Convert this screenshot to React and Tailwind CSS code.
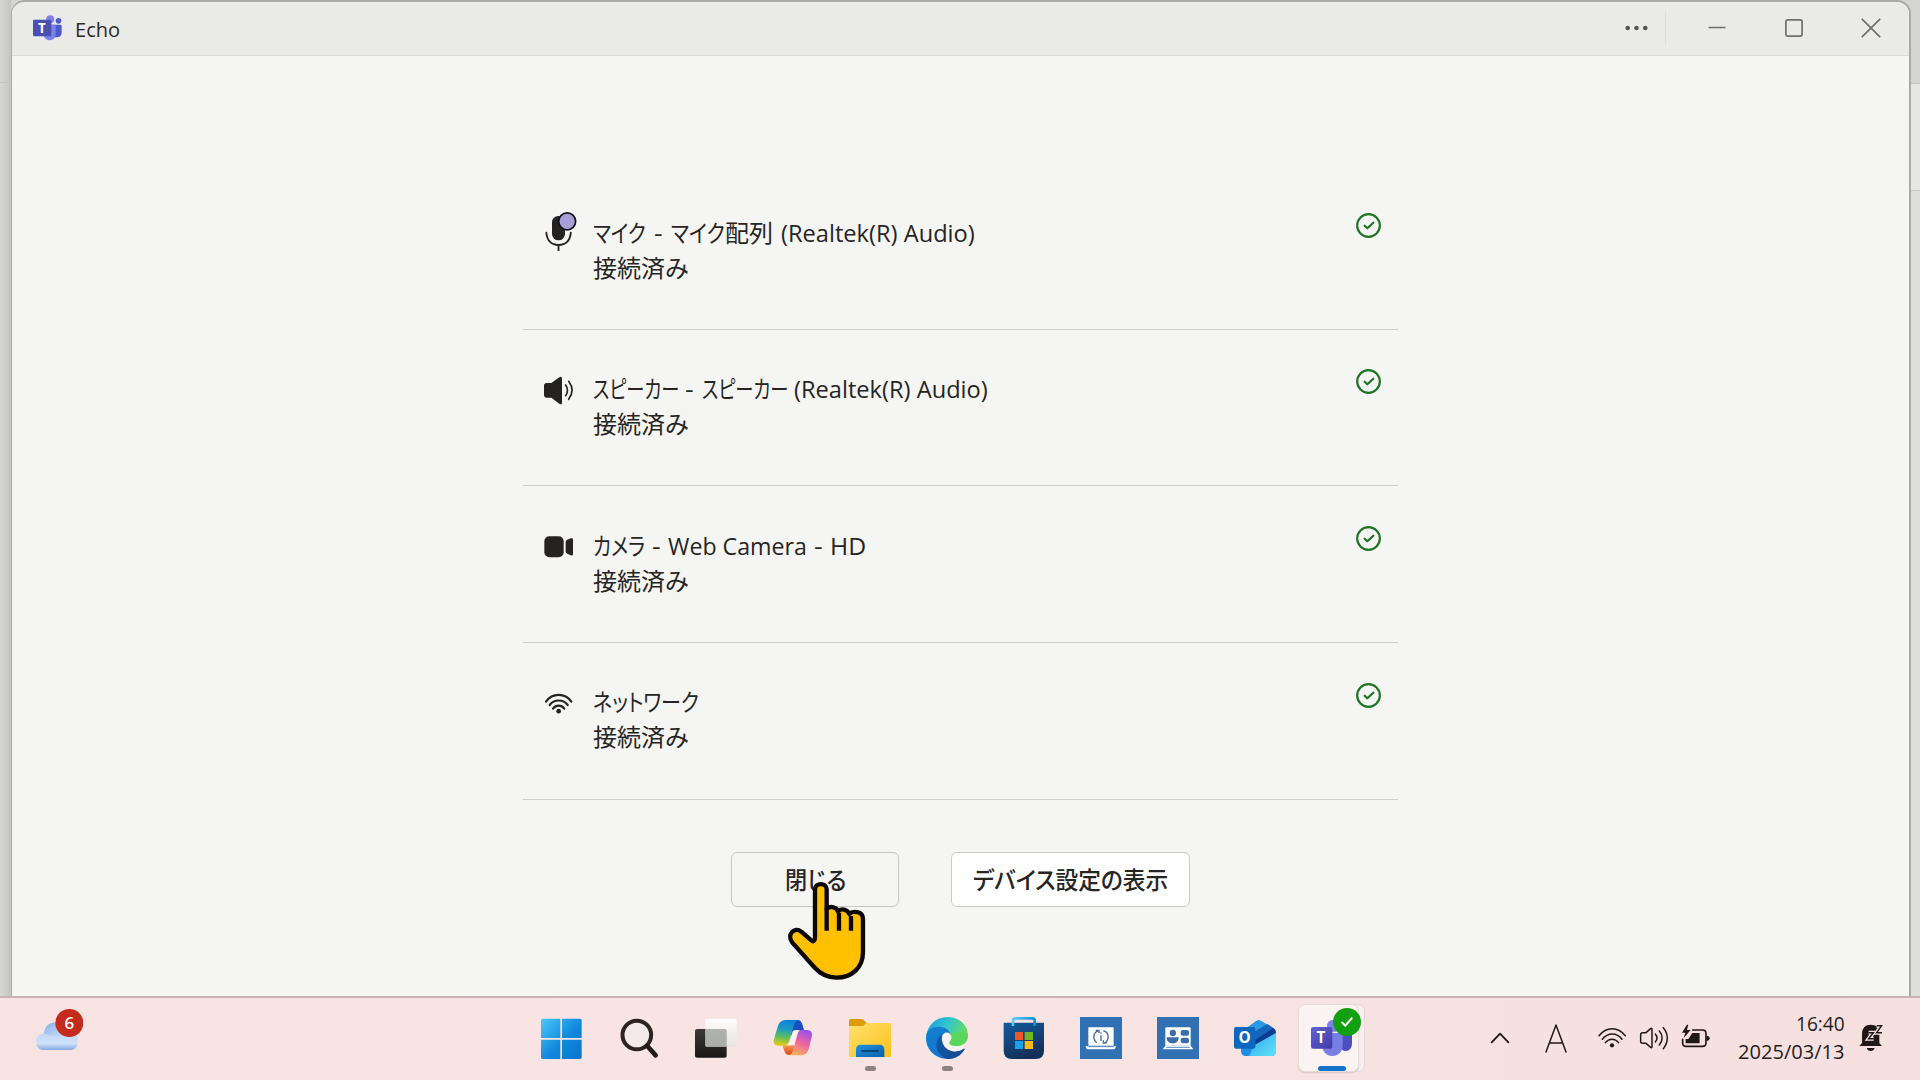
import { useLayoutEffect, useRef, useState } from "react";

const JP = "font-['Open_Sans','Noto_Sans_CJK_JP',sans-serif]";

// Text run squeezed or widened to an exact advance width.
function Fit({ w, className = "", children }) {
  const ref = useRef(null);
  const [scale, setScale] = useState(1);
  useLayoutEffect(() => {
    const measure = () => {
      if (ref.current) setScale(w / ref.current.offsetWidth);
    };
    measure();
    document.fonts?.ready.then(measure);
  }, [w]);
  return (
    <span className={`inline-block shrink-0 ${className}`} style={{ width: w }}>
      <span
        ref={ref}
        className="inline-block origin-left whitespace-pre [font-feature-settings:'palt']"
        style={{ transform: `scaleX(${scale})` }}
      >
        {children}
      </span>
    </span>
  );
}

const MicIcon = () => (
  <svg viewBox="72 66 96 120" className="h-10 w-8 overflow-visible">
    <rect x="96" y="78" width="39" height="73" rx="19" fill="#242322" />
    <path d="M79 128c2 24 16 37 36.500 37s34.500-13 37-37" fill="none" stroke="#242322" strokeWidth="5.500" strokeLinecap="round" />
    <path d="M115.500 165v18" stroke="#242322" strokeWidth="5.500" />
    <circle cx="141.500" cy="94" r="25.500" fill="#a79fd6" stroke="#14121c" strokeWidth="5" />
  </svg>
);

const SpeakerIcon = () => (
  <svg viewBox="72 537 96 120" className="h-10 w-8 overflow-visible">
    <path d="M80 579h14l24-17c5-4 8-2 8 4v71c0 6-3 8-8 4l-24-18H80c-5 0-8-3-8-8v-28c0-5 3-8 8-8z" fill="#242322" />
    <path d="M137 585c7 10 7 22 0 32M146 574c13 17 13 37 0 54" fill="none" stroke="#242322" strokeWidth="5" strokeLinecap="round" />
  </svg>
);

const CameraIcon = () => (
  <svg viewBox="72 77 96 120" className="h-10 w-8 overflow-visible">
    <rect x="73" y="111" width="58" height="63" rx="15" fill="#242322" />
    <path d="M137 129c0-4 2-6 5-8l10-4c4-1 7 0 7 4v42c0 5-3 6-7 5l-10-5c-3-1-5-3-5-7z" fill="#242322" />
  </svg>
);

const NetworkIcon = () => (
  <svg viewBox="72 547 96 120" className="h-10 w-8 overflow-visible">
    <g fill="none" stroke="#242322" strokeWidth="6.500" strokeLinecap="round">
      <path d="M78 606c19-27 57-27 76 0" />
      <path d="M89 616c13-18 41-18 54 0" />
      <path d="M99 627c8-12 26-12 34 0" />
    </g>
    <circle cx="116" cy="634.500" r="7" fill="#242322" />
  </svg>
);

const CheckBadge = () => (
  <svg viewBox="0 0 75 75" className="mt-[39.700px] h-[25px] w-[25px]">
    <circle cx="37.500" cy="37.500" r="34" fill="none" stroke="#1f7423" strokeWidth="6.500" />
    <path d="M26 38l8 8 18-17" fill="none" stroke="#1f7423" strokeWidth="6.500" strokeLinecap="round" strokeLinejoin="round" />
  </svg>
);

// Each run is [text, advance width, left gap].
const devices = [
  { icon: <MicIcon />, runs: [["マイク", 53, 0], ["-", 9, 8], ["マイク", 54, 8], ["配列", 48, 0], ["(Realtek(R) Audio)", 194, 8]] },
  { icon: <SpeakerIcon />, runs: [["スピーカー", 86, 0], ["-", 9, 6], ["スピーカー", 86, 8], ["(Realtek(R) Audio)", 194, 6]] },
  { icon: <CameraIcon />, runs: [["カメラ", 52, 0], ["-", 9, 7], ["Web Camera", 139, 7], ["-", 9, 7], ["HD", 36, 7]] },
  { icon: <NetworkIcon />, runs: [["ネットワーク", 106, 0]] },
];

function DeviceRow({ icon, runs }) {
  return (
    <li className="flex h-[156.670px] items-start border-b border-[#cfcfcd] pl-[21px] pr-[17px]">
      <div className="mt-[39px] w-[49px]">{icon}</div>
      <div className="mt-[41.500px] flex-1 text-[24px] leading-[35px] text-[#262524]">
        <div className="flex">
          {runs.map(([text, w, gap], i) => (
            <span key={i} className="flex" style={{ marginLeft: gap }}>
              <Fit w={w}>{text}</Fit>
            </span>
          ))}
        </div>
        <Fit w={95}>接続済み</Fit>
      </div>
      <CheckBadge />
    </li>
  );
}

const TitleTeams = () => (
  <svg viewBox="98 45 87 78" className="h-[26px] w-[29px]">
    <circle cx="174.500" cy="62.500" r="8.500" fill="#5059c9" />
    <path d="M150 74h30c3 0 4 2 4 4v20c0 9-6 14-14 14h-20z" fill="#5059c9" />
    <circle cx="149.500" cy="57.500" r="12" fill="#7b83eb" />
    <path d="M130 74h32c2 0 4 2 4 4v25c0 11-8 18-18 18s-18-7-18-18z" fill="#7b83eb" />
    <rect x="98" y="59" width="55" height="50" rx="4" fill="#4b4fb2" />
    <text x="124.500" y="99" textAnchor="middle" fontSize="40" fontWeight="700" fill="#fff" fontFamily="Open Sans">T</text>
  </svg>
);

function TitleBar() {
  return (
    <header className="flex h-[54px] items-center border-b border-[#dadad8] bg-[#eaeae9] pb-[2px]">
      <div className="ml-[21px] h-[26px]"><TitleTeams /></div>
      <div className="ml-[13px] mt-[2px] flex text-[20.500px] leading-7 text-[#2a2a29]"><Fit w={45}>Echo</Fit></div>
      <svg viewBox="0 0 23 6" className="ml-auto h-[6px] w-[23px] text-[#555]">
        <circle cx="2.700" cy="3" r="2.300" fill="currentColor" />
        <circle cx="11.500" cy="3" r="2.300" fill="currentColor" />
        <circle cx="20.300" cy="3" r="2.300" fill="currentColor" />
      </svg>
      <div className="ml-[17px] h-[34px] w-px bg-[#dededc]" />
      <svg viewBox="0 0 18 20" className="ml-[42px] h-5 w-[18px]"><path d="M0.500 9.500h17" stroke="#70706f" strokeWidth="1.600" /></svg>
      <svg viewBox="0 0 18 18" className="ml-[59px] mt-[1px] h-[18px] w-[18px]"><rect x=".9" y=".9" width="16.200" height="16.200" rx="2" fill="none" stroke="#70706f" strokeWidth="1.700" /></svg>
      <svg viewBox="0 0 20 20" className="ml-[58px] mr-[28px] mt-[1px] h-5 w-5"><path d="M.8.8l18.400 18.400M19.200.8L.8 19.200" stroke="#70706f" strokeWidth="1.700" /></svg>
    </header>
  );
}

const Hand = () => (
  <svg viewBox="265 155 235 300" className="pointer-events-none absolute left-[56.300px] top-[28px] z-10 h-[100px] w-[78.300px]">
    <path d="M346 324V180c0-21 35-21 35 0v59c7-9 29-9 34 7 8-9 28-8 34 8 9-10 41-9 41 14v101c0 45-32 76-80 76-26 0-48-11-66-31l-66-74c-18-24 6-49 27-33l30 26c5 5 11 3 11-9z" fill="#ffc000" stroke="#0a0706" strokeWidth="13" strokeLinejoin="round" />
    <path d="M381 235v69M418 250v54M454 260v44" stroke="#0a0706" strokeWidth="13" />
  </svg>
);

const WindowsIcon = () => (
  <svg viewBox="63 81 126 126" className="h-full w-full">
    <defs>
      <linearGradient id="win" gradientUnits="userSpaceOnUse" x1="63" y1="86" x2="186" y2="207">
        <stop offset="0" stopColor="#4cc8fb" /><stop offset=".55" stopColor="#1088dc" /><stop offset="1" stopColor="#0874cf" />
      </linearGradient>
    </defs>
    <g fill="url(#win)">
      <path d="M68 86h53v58H63V91q0-5 5-5z" /><path d="M126 86h54q5 0 5 5v53h-59z" />
      <path d="M63 149h58v58H68q-5 0-5-5z" /><path d="M126 149h59v53q0 5-5 5h-54z" />
    </g>
  </svg>
);

const SearchIcon = () => (
  <svg viewBox="294 81 126 126" className="h-full w-full">
    <circle cx="350.500" cy="135" r="43" fill="#f4eae9" stroke="#2c2423" strokeWidth="12" />
    <path d="M382 168l25 28" stroke="#201a19" strokeWidth="14" strokeLinecap="round" />
  </svg>
);

const TaskViewIcon = () => (
  <svg viewBox="525 81 126 126" className="h-full w-full">
    <defs>
      <linearGradient id="tvd" x1="0" y1="0" x2="0" y2="1"><stop offset="0" stopColor="#3c3a38" /><stop offset="1" stopColor="#191817" /></linearGradient>
      <linearGradient id="tvl" x1="0" y1="0" x2="0" y2="1"><stop offset="0" stopColor="#fff" stopOpacity=".95" /><stop offset="1" stopColor="#e4e3e1" stopOpacity=".85" /></linearGradient>
    </defs>
    <rect x="525" y="117" width="95" height="86" rx="6" fill="url(#tvd)" />
    <rect x="556" y="86" width="94" height="84" rx="4" fill="url(#tvl)" />
    <path d="M556 117h58q6 0 6 6v47h-60q-4 0-4-4z" fill="#a5a8a4" opacity=".85" />
  </svg>
);

const CopilotIcon = () => (
  <svg viewBox="756 81 126 126" className="h-full w-full">
    <defs>
      <linearGradient id="cpl" x1=".4" y1="0" x2=".3" y2="1"><stop offset="0" stopColor="#0e82d8" /><stop offset=".35" stopColor="#1c9cc0" /><stop offset=".65" stopColor="#5bbf61" /><stop offset="1" stopColor="#f0cb10" /></linearGradient>
      <linearGradient id="cpr" x1=".7" y1="0" x2=".3" y2="1"><stop offset="0" stopColor="#9b50ee" /><stop offset=".5" stopColor="#ef659d" /><stop offset="1" stopColor="#fbb05c" /></linearGradient>
      <linearGradient id="cpt" x1="0" y1="0" x2="1" y2="1"><stop offset="0" stopColor="#0f55c4" /><stop offset="1" stopColor="#2447c5" /></linearGradient>
      <linearGradient id="cpb" x1="0" y1="0" x2="0" y2="1"><stop offset="0" stopColor="#f59a4e" /><stop offset="1" stopColor="#d8421f" /></linearGradient>
    </defs>
    <path d="M812 90h20c9 0 13 6 15 13l5 18h-20c-12 0-14 7-18 18z" fill="url(#cpt)" />
    <path d="M788 166h34l4 29h-18c-11 0-14-9-17-18z" fill="url(#cpb)" />
    <path d="M798 90h36c-9 3-12 12-15 24l-10 36c-4 13-10 17-20 17h-15c-11 0-15-8-12-20l12-40c4-11 12-17 24-17z" fill="url(#cpl)" />
    <path d="M841 120h20c13 0 17 9 14 21l-9 36c-4 13-13 19-24 19h-36c10-3 12-10 15-21l10-36c3-12 5-17 10-19z" fill="url(#cpr)" />
    <path d="M822 121h16c-7 4-9 10-12 22-4 15-8 23-20 23h-4c7-4 9-12 12-23 4-15 2-18 8-22z" fill="#fbf3ef" />
  </svg>
);

const FolderIcon = () => (
  <svg viewBox="57 81 126 126" className="h-full w-full">
    <defs>
      <linearGradient id="fol" x1="0" y1="0" x2="1" y2="1"><stop offset="0" stopColor="#ffe06e" /><stop offset="1" stopColor="#fbc21c" /></linearGradient>
      <linearGradient id="folb" x1="0" y1="0" x2="1" y2="1"><stop offset="0" stopColor="#1f93dc" /><stop offset="1" stopColor="#0c61a9" /></linearGradient>
    </defs>
    <path d="M57 112V92q0-5 5-5h32q5 0 8 4l9 9v12z" fill="#dd9c09" />
    <path d="M57 108h41c5 0 7-9 13-9h67q5 0 5 5v92q0 5-5 5H62q-5 0-5-5z" fill="url(#fol)" />
    <path d="M78 201v-22q0-15 14-15h56q15 0 15 15v22z" fill="url(#folb)" />
    <path d="M96 183h48" stroke="#074779" strokeWidth="5.500" strokeLinecap="round" />
  </svg>
);

const EdgeIcon = () => (
  <svg viewBox="288 81 126 126" className="h-full w-full">
    <defs>
      <linearGradient id="edt" x1="0" y1=".2" x2="1" y2=".6"><stop offset="0" stopColor="#1b9cdf" /><stop offset=".45" stopColor="#33c4cd" /><stop offset="1" stopColor="#6de04f" /></linearGradient>
      <linearGradient id="edl" x1="0" y1="0" x2=".3" y2="1"><stop offset="0" stopColor="#147fcf" /><stop offset="1" stopColor="#1177d3" /></linearGradient>
      <linearGradient id="edb" x1="0" y1="0" x2="1" y2="1"><stop offset="0" stopColor="#0c5ba9" /><stop offset="1" stopColor="#164a8e" /></linearGradient>
    </defs>
    <path d="M288 142c3-35 29-61 64-61 36 0 62 25 62 54 0 21-15 33-34 33-14 0-24-4-22-10 9-9 11-17 5-27-10-16-37-25-75 11z" fill="url(#edt)" />
    <path d="M288 144c0-23 18-34 38-34 22 0 37 13 38 30-10-14-26-13-30 2-8 30 9 55 28 64-42 5-74-25-74-62z" fill="url(#edl)" />
    <path d="M337 134c-5 17 2 45 31 49 12 2 23-2 31-7 4-3 7 0 4 4-13 20-31 28-50 27-26-5-39-33-32-55 3-9 8-15 16-18z" fill="url(#edb)" />
    <path d="M345 129c9-4 18 2 18 12 0 7-4 12-5 16-2 8 12 12 22 12 9 0 18-2 24-5v12c-4-2-5 1-10 4-27 13-56-5-56-33 0-8 2-15 7-18z" fill="#f8f2f2" />
    <path d="M358 157c8-9 9-20 3-28l40-4 13 10c0 21-15 33-34 33-14 0-24-4-22-11z" fill="#5bd65c" />
  </svg>
);

const StoreIcon = () => (
  <svg viewBox="519 81 126 126" className="h-full w-full">
    <defs>
      <linearGradient id="sto" x1="0" y1="0" x2=".4" y2="1"><stop offset="0" stopColor="#135b9f" /><stop offset="1" stopColor="#14305a" /></linearGradient>
      <linearGradient id="stoh" x1="0" y1="0" x2="1" y2="0"><stop offset="0" stopColor="#58cdf8" /><stop offset="1" stopColor="#198fd2" /></linearGradient>
    </defs>
    <path d="M521 98h121v84q0 25-25 25h-71q-25 0-25-25z" fill="url(#sto)" />
    <path d="M549 108V92q0-7 7-7h51q7 0 7 7v16" fill="none" stroke="url(#stoh)" strokeWidth="8" />
    <path d="M555 126h24v24h-24z" fill="#f0562b" /><path d="M584 126h25v24h-25z" fill="#76b422" />
    <path d="M555 153h24v24h-24z" fill="#16a1ea" /><path d="M584 153h25v24h-25z" fill="#fbb911" />
  </svg>
);

const AssistIcon = () => (
  <svg viewBox="750 81 126 126" className="h-full w-full">
    <path d="M750 81h126v126H750z" fill="#3070b3" />
    <path d="M777 112h72q2 0 2 2v53h-76v-53q0-2 2-2z" fill="#fff" />
    <path d="M766 169h93l-5 9h-83z" fill="#fff" />
    <path d="M775 170h76" stroke="#3070b3" strokeWidth="2.500" />
    <g fill="none" stroke="#456a96" strokeWidth="4">
      <path d="M806 122c-17 5-19 25-6 36M820 122c17 5 19 24 6 36" />
      <path d="M797 121h10v8M830 159h-10v-8M813 136v17" />
    </g>
    <circle cx="813" cy="129" r="2.500" fill="#456a96" />
  </svg>
);

const MeetingIcon = () => (
  <svg viewBox="81 81 126 126" className="h-full w-full">
    <path d="M81 81h126v126H81z" fill="#3070b3" />
    <path d="M109 112h70q3 0 3 3v52h-76v-52q0-3 3-3z" fill="#fff" />
    <path d="M98 178h92l-8-11h-76z" fill="#fff" />
    <path d="M109 172h70" stroke="#3070b3" strokeWidth="2.500" />
    <g fill="#3b6ea8">
      <circle cx="128.500" cy="129" r="9.500" />
      <path d="M110 142h36c0 12-7 18-18 18s-18-6-18-18z" />
      <rect x="152" y="120" width="25" height="17" rx="6" /><rect x="152" y="143" width="25" height="17" rx="6" />
    </g>
  </svg>
);

const OutlookIcon = () => (
  <svg viewBox="312 81 126 126" className="h-full w-full">
    <defs>
      <linearGradient id="ola" x1="0" y1="0" x2="1" y2="1"><stop offset="0" stopColor="#2fa6e8" /><stop offset="1" stopColor="#62e4fc" /></linearGradient>
    </defs>
    <path d="M333 125l46-32q7-5 14 0l37 22q8 5 8 14v55q0 14-14 14h-76q-15 0-15-15z" fill="#1f8fdf" />
    <path d="M345 119l34-26q7-5 14 0l16 9-50 34z" fill="#2b9ae6" />
    <path d="M362 132l50-30 18 12-55 37z" fill="#1565bd" />
    <path d="M375 150l55-36q8 5 8 14l-55 37h-8z" fill="#083d91" />
    <path d="M438 129v55q0 14-14 14h-66l14-32z" fill="url(#ola)" />
    <rect x="312" y="111" width="64" height="65" rx="6" fill="#0f66be" />
    <text x="344" y="160" textAnchor="middle" fontSize="46" fontWeight="700" fill="#fff" fontFamily="Open Sans">O</text>
  </svg>
);

const TeamsIcon = () => (
  <svg viewBox="543 81 126 126" className="h-full w-full overflow-visible">
    <defs>
      <linearGradient id="tmt" x1="0" y1="0" x2="1" y2="1"><stop offset="0" stopColor="#6360cf" /><stop offset="1" stopColor="#3f3da8" /></linearGradient>
    </defs>
    <path d="M628 126h31q7 0 7 7v27c0 15-8 23-19 23s-19-8-19-20z" fill="#4c50bf" />
    <circle cx="610" cy="108" r="19" fill="#7b83eb" />
    <path d="M577 126h55q6 0 6 6v33c0 20-13 33-31 33s-30-13-30-32z" fill="#777fe4" />
    <path d="M605 127h24" stroke="#fff" strokeWidth="3" />
    <rect x="543" y="111" width="64" height="65" rx="6" fill="url(#tmt)" />
    <text x="573" y="160" textAnchor="middle" fontSize="46" fontWeight="700" fill="#fff" fontFamily="Open Sans">T</text>
    <circle cx="651" cy="96" r="42" fill="#11a010" />
    <path d="M637 98l9 9 19-22" fill="none" stroke="#fff" strokeWidth="6.500" strokeLinecap="round" strokeLinejoin="round" />
  </svg>
);

const apps = [
  { Icon: WindowsIcon }, { Icon: SearchIcon }, { Icon: TaskViewIcon }, { Icon: CopilotIcon },
  { Icon: FolderIcon, open: true }, { Icon: EdgeIcon, open: true }, { Icon: StoreIcon },
  { Icon: AssistIcon }, { Icon: MeetingIcon }, { Icon: OutlookIcon }, { Icon: TeamsIcon, active: true },
];

function AppButton({ Icon, open, active }) {
  return (
    <div className="relative h-[42px] w-[42px]">
      {active && (
        <>
          <div className="absolute -left-[6px] -top-[13px] h-[68px] w-[60px] rounded-[7px] border border-[#e6d8d8] bg-[#f9eeed]" />
          <div className="absolute -left-[13px] -top-[13px] h-[68px] w-[61px] rounded-[7px] border border-[#e9dddc] bg-[#fbf3f2] shadow-[0_1px_1px_#d9c8c7]" />
        </>
      )}
      <div className="relative h-full w-full"><Icon /></div>
      {open && <div className="absolute -bottom-[12px] left-4 h-[5px] w-[11px] rounded-full bg-[#8f8180]" />}
      {active && <div className="absolute -bottom-[12px] left-[7px] h-[5px] w-7 rounded-full bg-[#1373c8]" />}
    </div>
  );
}

const WeatherIcon = () => (
  <svg viewBox="108 84 142 126" className="ml-9 mb-[16px] h-[42px] w-[47.300px]">
    <defs>
      <linearGradient id="cla" x1="0" y1="0" x2="1" y2="1"><stop offset="0" stopColor="#86aeea" /><stop offset="1" stopColor="#d0e1fa" /></linearGradient>
      <linearGradient id="clb" x1="0" y1="0" x2="0" y2="1"><stop offset="0" stopColor="#c4d6f4" /><stop offset=".6" stopColor="#cfe2fb" /><stop offset="1" stopColor="#84a9e2" /></linearGradient>
    </defs>
    <path d="M131 165c0-26 14-41 36-41s38 16 38 41z" fill="url(#cla)" />
    <path d="M130 158c12 0 20 7 30 7h74v17c0 15-10 25-25 25h-77c-14 0-24-10-24-25 0-14 9-24 22-24z" fill="url(#clb)" />
    <circle cx="208" cy="126" r="42" fill="#c42b1c" />
    <text x="208" y="145" textAnchor="middle" fontSize="51" fontWeight="600" fill="#fff" fontFamily="Open Sans">6</text>
  </svg>
);

const TrayIcons = () => (
  <svg viewBox="90 98 662 92" className="h-[30.670px] w-[220.670px]" fill="none" stroke="#201817" strokeWidth="5" strokeLinecap="round" strokeLinejoin="round">
    <path d="M95 156l25-26 25 26" strokeWidth="5.500" />
    <path d="M258 185l30-81 30 81M268 158h40" strokeWidth="4.500" />
    <path d="M417 136c22-28 57-28 79 0M427 147c17-21 43-21 59 0M436 157c11-14 29-14 40 0" strokeWidth="4.500" />
    <circle cx="456" cy="165" r="6.500" fill="#201817" stroke="none" />
    <path d="M548 127h10l14-12c2-2 4-1 4 2v52c0 3-2 4-4 2l-14-12h-10q-6 0-6-6v-20q0-6 6-6zM586 131c6 7 6 17 0 24M598 122c11 12 11 30 0 42M610 112c16 19 16 43 0 63" strokeWidth="4.500" />
    <path d="M698 119h30q10 0 10 10v29q0 10-10 10h-50q-10 0-10-10v-11" />
    <path d="M740 136q9 1 9 8t-9 8z" fill="#201817" stroke="none" />
    <path d="M697 128h22v31h-42v-13h8z" fill="#201817" stroke="none" />
    <path d="M681 103l-15 24h10l-5 17 21-25h-11l4-16z" fill="#201817" stroke="none" />
  </svg>
);

const BellIcon = () => (
  <svg viewBox="1198 102 74 88" className="h-[29.300px] w-[24.700px]">
    <path d="M1207 162v-28c0-17 11-27 26-27 16 0 26 10 26 27v28l8 9h-68z" fill="#201817" />
    <path d="M1221 177h24c-2 6-6 9-12 9s-10-3-12-9z" fill="#201817" />
    <path d="M1251 110h14l-14 21h14M1227 131h14l-14 18h15" fill="none" stroke="#f6e4e3" strokeWidth="12" />
    <path d="M1251 110h15l-15 21h16M1227 131h14l-14 18h16" fill="none" stroke="#201817" strokeWidth="4.500" />
  </svg>
);

function Taskbar() {
  return (
    <footer className="relative z-20 flex h-[84px] items-center border-t-2 border-[#c9b3b2] bg-gradient-to-r from-[#f6e3e2] via-[#f7e4e3] to-[#f5e0df] pb-[2px]">
      <div className="w-[541px]"><WeatherIcon /></div>
      <nav className="flex gap-[35px]">
        {apps.map((app, i) => <AppButton key={i} {...app} />)}
      </nav>
      <div className="ml-[137px]"><TrayIcons /></div>
      <div className="ml-[26px] flex w-[108px] flex-col items-end text-[19.500px] leading-[28px] text-[#271d1c]">
        <Fit w={49}>16:40</Fit>
        <Fit w={107}>2025/03/13</Fit>
      </div>
      <div className="ml-[14px]"><BellIcon /></div>
    </footer>
  );
}

export default function App() {
  return (
    <div className={`flex h-[1080px] w-[1920px] flex-col overflow-hidden bg-[#d5d5d2] ${JP}`}>
      <div className="flex h-[996px] items-stretch">
        <div className="w-[11px] bg-gradient-to-r from-[#d6d6d3] to-[#c4c4c1]">
          <div className="h-[83px] border-b border-[#c2c2bf]" />
        </div>
        <main className="flex flex-1 flex-col overflow-hidden rounded-t-[14px] border-l border-r-2 border-t-2 border-[#aaaaa8] bg-[#f5f5f3]">
          <TitleBar />
          <div className="flex flex-1 flex-col items-center pt-[117px]">
            <ul className="w-[875px]">
              {devices.map((d, i) => <DeviceRow key={i} {...d} />)}
            </ul>
            <div className="mt-[52px] flex gap-[52px] text-[24px] font-medium leading-[35px] text-[#262524]">
              <button className="relative flex h-[55px] w-[168px] items-center justify-center rounded-[6px] border border-[#c6c6c4] bg-[#f5f5f4]">
                <Fit w={61}>閉じる</Fit>
                <Hand />
              </button>
              <button className="flex h-[55px] w-[239px] items-center justify-center rounded-[6px] border border-[#cbcbc9] bg-[#fefefe]">
                <Fit w={195}>デバイス設定の表示</Fit>
              </button>
            </div>
          </div>
        </main>
        <div className="w-[9px] bg-[#dfdfdd]">
          <div className="h-[84px] border-b border-[#c2c2bf] bg-[#d4d4d1]" />
          <div className="h-[107px] border-b border-[#cacac8] bg-[#e7e7e5]" />
        </div>
      </div>
      <Taskbar />
    </div>
  );
}
